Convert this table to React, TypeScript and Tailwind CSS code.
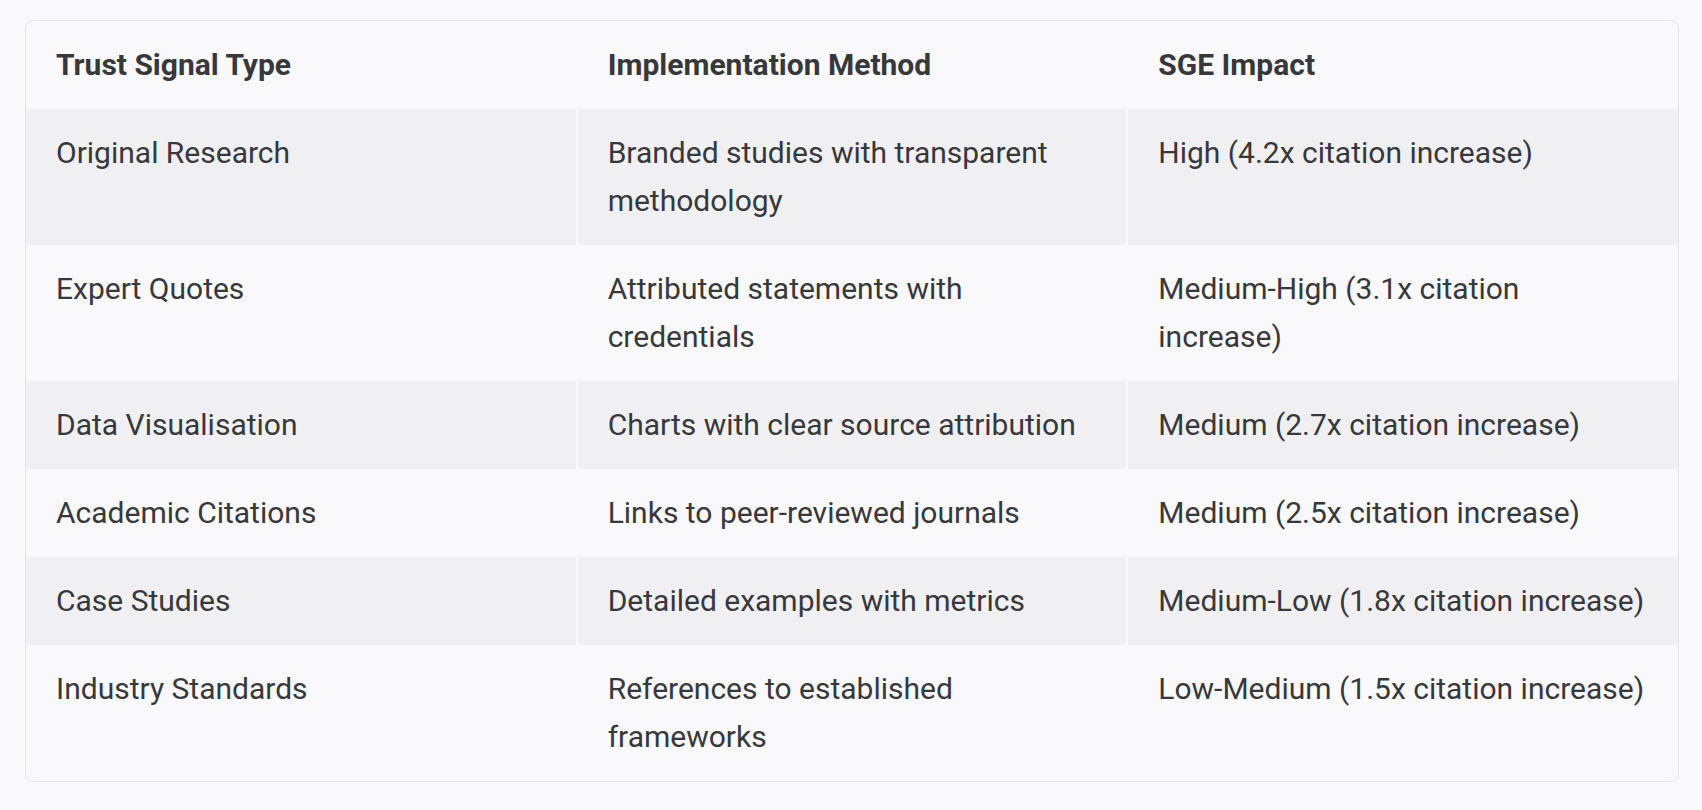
import React from 'react';

const rows = [
  ['Original Research', 'Branded studies with transparent methodology', 'High (4.2x citation increase)'],
  ['Expert Quotes', 'Attributed statements with credentials', 'Medium-High (3.1x citation increase)'],
  ['Data Visualisation', 'Charts with clear source attribution', 'Medium (2.7x citation increase)'],
  ['Academic Citations', 'Links to peer-reviewed journals', 'Medium (2.5x citation increase)'],
  ['Case Studies', 'Detailed examples with metrics', 'Medium-Low (1.8x citation increase)'],
  ['Industry Standards', 'References to established frameworks', 'Low-Medium (1.5x citation increase)'],
];

export default function App() {
  return (
    <div
      className="min-h-[810px] bg-[#f9f9fb] pt-[20px] pl-[25px] text-[#38383b]"
      style={{ fontFamily: 'Roboto, "Noto Sans", sans-serif' }}
    >
      <div className="w-[1654px] overflow-hidden rounded-[9px] border border-[#e6e6e9] bg-[#f9f9fb]">
        <table className="w-full table-fixed border-collapse text-left text-[30px] leading-[48px]">
          <thead>
            <tr>
              <th className="w-1/3 px-[30px] py-5 font-bold">Trust Signal Type</th>
              <th className="w-1/3 border-l-2 border-[#f9f9fb] px-[30px] py-5 font-bold">Implementation Method</th>
              <th className="w-1/3 border-l-2 border-[#f9f9fb] px-[30px] py-5 font-bold">SGE Impact</th>
            </tr>
          </thead>
          <tbody>
            {rows.map((r, i) => (
              <tr key={r[0]} className={i % 2 === 0 ? 'bg-[#f0f0f2]' : ''}>
                <td className="px-[30px] py-5 align-top">{r[0]}</td>
                <td className="border-l-2 border-[#f9f9fb] px-[30px] py-5 align-top">{r[1]}</td>
                <td className="border-l-2 border-[#f9f9fb] px-[30px] py-5 align-top">{r[2]}</td>
              </tr>
            ))}
          </tbody>
        </table>
      </div>
    </div>
  );
}
